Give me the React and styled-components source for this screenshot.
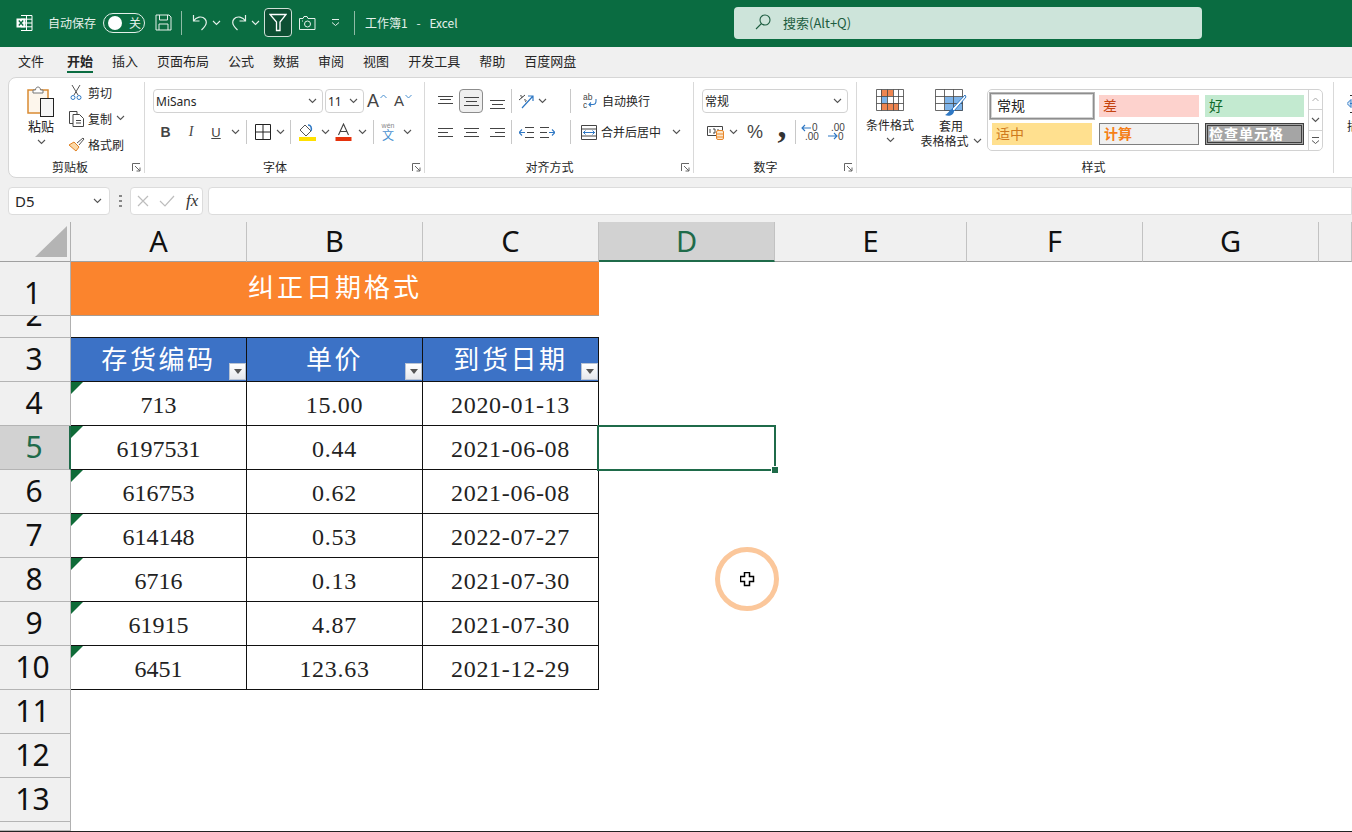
import React from 'react';
import styled, { createGlobalStyle } from 'styled-components';

const CJK = `"Noto Sans CJK SC", "Noto Sans", sans-serif`;

const GlobalStyle = createGlobalStyle`
  html, body { margin: 0; height: 100%; overflow: hidden; background: #f0f0f0; }
  body { font-family: ${CJK}; color: #262626; }
  * { box-sizing: border-box; }
  svg { display: block; flex: none; }
`;

const Page = styled.div`
  width: 1352px;
  height: 832px;
  display: flex;
  flex-direction: column;
  overflow: hidden;
  background: #f0f0f0;
`;

/* title bar */
const TitleBar = styled.div`
  height: 47px;
  flex: none;
  background: #0a6c41;
  display: flex;
  align-items: center;
  padding: 0 0 2px 16px;
  color: #e4f0ea;
  font-size: 12px;
`;
const Slot = styled.div`
  width: ${p => p.$w}px;
  height: ${p => p.$h || 24}px;
  margin-left: ${p => p.$ml || 0}px;
  flex: none;
  display: flex;
  align-items: center;
  justify-content: center;
`;
const BarDivider = styled.div`
  width: 1px;
  height: 24px;
  flex: none;
  background: #8fbba6;
  margin: 0 ${p => p.$r || 0}px 0 ${p => p.$l || 0}px;
`;
const AutoSave = styled.span`
  margin-left: 15px;
  width: 55px;
  flex: none;
`;
const Toggle = styled.div`
  width: 42px;
  height: 20px;
  flex: none;
  border: 1px solid #e4f0ea;
  border-radius: 10px;
  display: flex;
  align-items: center;
  padding-left: 4px;
  gap: 7px;
  font-size: 12px;
`;
const Knob = styled.i`
  width: 14px;
  height: 14px;
  border-radius: 50%;
  background: #fff;
`;
const FilterButton = styled.div`
  width: 28px;
  height: 29px;
  flex: none;
  margin-left: 1px;
  border: 1px solid #cfe0d7;
  border-radius: 4px;
  background: #0d4f33;
  display: flex;
  align-items: center;
  justify-content: center;
`;
const DocTitle = styled.div`
  margin-left: 10px;
  width: 369px;
  flex: none;
  white-space: pre;
  word-spacing: 1.7px;
`;
const SearchBox = styled.div`
  width: 468px;
  height: 32px;
  flex: none;
  background: #cde4da;
  border-radius: 4px;
  display: flex;
  align-items: center;
  padding: 0 0 1px 21px;
  gap: 12px;
  color: #1d5d40;
  font-size: 13px;
`;

/* ribbon tabs */
const Tabs = styled.div`
  height: 28px;
  flex: none;
  display: flex;
  gap: 19px;
  padding-left: 18px;
  font-size: 13px;
  line-height: 27px;
`;
const Tab = styled.div`
  position: relative;
  font-weight: ${p => (p.$active ? 700 : 400)};
  &:first-child { margin-right: 4px; }
  ${p => p.$active && `
    &::after {
      content: '';
      position: absolute;
      left: 0;
      right: 0;
      bottom: 2px;
      height: 2px;
      background: #0a6c41;
    }
  `}
`;

/* ribbon */
const Ribbon = styled.div`
  height: 101px;
  flex: none;
  margin: 2px -10px 0 8px;
  background: #fff;
  border: 1px solid #d6d6d6;
  border-radius: 8px;
  display: flex;
  align-items: stretch;
  overflow: hidden;
  font-size: 12px;
`;
const Group = styled.div`
  width: ${p => p.$w}px;
  flex: none;
  display: flex;
  flex-direction: column;
`;
const GroupSep = styled.div`
  width: 1px;
  flex: none;
  background: #d9d9d9;
  margin: 4px 0;
`;
const GroupBody = styled.div`
  padding: ${p => p.$top ?? 11}px 0 0 ${p => p.$left ?? 8}px;
  display: flex;
  flex: 1;
  min-height: 0;
`;
const Rows = styled.div`
  display: flex;
  flex-direction: column;
  gap: 7px;
`;
const Row = styled.div`
  display: flex;
  align-items: center;
  height: 24px;
`;
const GroupLabel = styled.div`
  height: 20px;
  display: grid;
  grid-template-columns: 1fr auto 1fr;
  align-items: center;
  padding-right: 3px;
  line-height: 20px;
  & > span { grid-column: 2; margin-right: ${p => p.$shift || 0}px; }
  & > svg { justify-self: end; }
`;
const VSep = styled.div`
  width: 1px;
  height: 24px;
  flex: none;
  background: #c8c8c8;
  margin: 0 ${p => p.$r ?? 4}px 0 ${p => p.$l ?? 4}px;
`;
const PasteColumn = styled.div`
  width: 32px;
  flex: none;
  padding-top: 5px;
  display: flex;
  flex-direction: column;
  align-items: center;
  font-size: 13px;
  line-height: 18px;
  & > svg:first-child { margin-bottom: -1px; }
  & > svg:last-child { margin-top: 4px; }
`;
const ClipColumn = styled.div`
  margin-left: 11px;
  display: flex;
  flex-direction: column;
`;
const ClipRow = styled.div`
  height: 26px;
  display: flex;
  align-items: center;
  & > span { margin-left: 4px; }
`;
const SelectBox = styled.div`
  width: ${p => p.$w}px;
  height: 24px;
  flex: none;
  margin-right: ${p => p.$mr || 0}px;
  background: #fff;
  border: 1px solid #d2d2d2;
  border-radius: 4px;
  display: flex;
  align-items: center;
  justify-content: space-between;
  padding: 0 5px 0 2px;
  font-family: "Noto Sans", ${CJK};
  font-size: 12px;
`;
const BoldMark = styled.span`
  font-family: "Liberation Sans", sans-serif;
  font-size: 14px;
  font-weight: 700;
  color: #444;
`;
const ItalicMark = styled(BoldMark)`
  font-family: "Liberation Serif", serif;
  font-weight: 400;
  font-style: italic;
`;
const UnderMark = styled(BoldMark)`
  font-weight: 400;
  text-decoration: underline;
  font-size: 13px;
`;
const GrowA = styled.span`
  font-family: "Liberation Sans", sans-serif;
  font-size: ${p => p.$size}px;
  line-height: 20px;
  color: #444;
  display: flex;
  align-items: flex-start;
  gap: 1px;
  & > svg { margin-top: 3px; }
`;
const PercentMark = styled.span`
  font-family: "Liberation Sans", sans-serif;
  font-size: 18px;
  color: #444;
`;
const CommaMark = styled.span`
  font-family: "Liberation Serif", serif;
  font-size: 36px;
  font-weight: 700;
  line-height: 24px;
  color: #333;
  transform: translateY(-7px);
`;
const ActiveAlign = styled.div`
  width: 24px;
  height: 24px;
  flex: none;
  margin: 0 2px;
  background: #efefef;
  border: 1px solid #8c8c8c;
  border-radius: 4px;
  display: flex;
  align-items: center;
  justify-content: center;
`;
const TextRun = styled.span`
  margin-left: ${p => p.$l || 4}px;
  padding-bottom: 1px;
  flex: none;
`;
const BigButton = styled.div`
  width: ${p => p.$w}px;
  flex: none;
  margin-left: ${p => p.$ml || 0}px;
  display: flex;
  flex-direction: column;
  align-items: center;
  line-height: 15px;
  font-size: 12px;
  white-space: nowrap;
  & > svg:first-child { margin-bottom: ${p => p.$gap}px; }
`;
const CaptionRow = styled.div`
  display: flex;
  align-items: center;
  gap: 4px;
  height: 15px;
`;
const Gallery = styled.div`
  width: 336px;
  height: 62px;
  flex: none;
  margin-left: 6px;
  border: 1px solid #d2d2d2;
  border-radius: 5px;
  display: flex;
`;
const StyleGrid = styled.div`
  width: 320px;
  display: grid;
  grid-template-columns: 109px 106px 105px;
  grid-template-rows: 30px 26px;
  padding: 2px 0 0 1px;
`;
const StyleCell = styled.div`
  margin: ${p => p.$m || '3px 5px 5px 1px'};
  display: flex;
  align-items: center;
  padding: 0 0 3px ${p => p.$pl || 4}px;
  font-size: 14px;
  line-height: 1;
  white-space: nowrap;
  ${p => p.$kind === 'normal' && `background:#fff;color:#222;border:1px solid #8e8e8e;outline:1px solid #b5b5b5;box-shadow:inset 0 0 0 1px #d4d4d4;`}
  ${p => p.$kind === 'bad' && `background:#fdd2cd;color:#c4430f;`}
  ${p => p.$kind === 'good' && `background:#c3ead0;color:#0f6a2a;`}
  ${p => p.$kind === 'mid' && `background:#ffe08f;color:#cf7a1c;`}
  ${p => p.$kind === 'calc' && `background:#f0f0f0;color:#f57f17;font-weight:700;border:1px solid #7f7f7f;`}
  ${p => p.$kind === 'check' && `background:#a5a5a5;color:#fff;font-weight:700;letter-spacing:1px;border:3px double #3f3f3f;`}
`;
const GalleryScroll = styled.div`
  width: 15px;
  margin-left: auto;
  border-left: 1px solid #d2d2d2;
  display: flex;
  flex-direction: column;
`;
const ScrollBtn = styled.div`
  flex: 1;
  display: flex;
  align-items: center;
  justify-content: center;
  & + & { border-top: 1px solid #d2d2d2; }
`;
const ClippedGroup = styled.div`
  margin-left: 13px;
  padding-top: 17px;
  display: flex;
  flex-direction: column;
  gap: 5px;
  width: 48px;
  flex: none;
  line-height: 15px;
`;

/* formula bar */
const FormulaBar = styled.div`
  height: 28px;
  flex: none;
  margin: 9px 0 7px 8px;
  display: flex;
  align-items: stretch;
`;
const NameBox = styled.div`
  width: 102px;
  flex: none;
  background: #fff;
  border: 1px solid #dcdcdc;
  border-radius: 4px;
  display: flex;
  align-items: center;
  justify-content: space-between;
  padding: 0 7px 0 6px;
  font-family: "Noto Sans", sans-serif;
  font-size: 15px;
`;
const BarDots = styled.div`
  width: 20px;
  flex: none;
  display: flex;
  align-items: center;
  justify-content: center;
`;
const FxBox = styled.div`
  width: 73px;
  flex: none;
  background: #fff;
  border: 1px solid #dcdcdc;
  border-radius: 4px;
  display: flex;
  align-items: center;
  padding-left: 5px;
  gap: 9px;
`;
const FxMark = styled.span`
  font-family: "Liberation Serif", serif;
  font-style: italic;
  font-size: 17px;
  color: #333;
  margin-left: 2px;
`;
const FormulaInput = styled.div`
  flex: 1;
  margin-left: 5px;
  background: #fff;
  border: 1px solid #dcdcdc;
  border-radius: 4px 0 0 4px;
`;

/* sheet */
const Sheet = styled.div`
  position: relative;
  flex: 1;
  background: #fff;
  display: grid;
  grid-template-columns: 71px 176px 176px 176px 176px 192px 176px 176px 1fr;
  grid-template-rows: 40px 54px 22px repeat(11, 44px) 1fr;
  border-bottom: 1px solid #222;
  overflow: hidden;
`;
const Corner = styled.div`
  background: #f0f0f0;
  border-right: 1px solid #b0b0b0;
  border-bottom: 1px solid #a0a0a0;
  display: flex;
  align-items: flex-end;
  justify-content: flex-end;
  padding: 0 3px 4px 0;
`;
const ColHead = styled.div`
  background: ${p => (p.$sel ? '#d2d2d2' : '#f0f0f0')};
  color: ${p => (p.$sel ? '#1f6b4a' : '#111')};
  border-right: 1px solid #c2c2c2;
  border-bottom: ${p => (p.$sel ? '2px solid #1f6b4a' : '1px solid #a0a0a0')};
  font-family: "Noto Sans", sans-serif;
  font-size: 29px;
  line-height: 37px;
  text-align: center;
`;
const RowHead = styled.div`
  background: ${p => (p.$sel ? '#d2d2d2' : '#f0f0f0')};
  color: ${p => (p.$sel ? '#1f6b4a' : '#111')};
  border-right: ${p => (p.$sel ? '2px solid #1f6b4a' : '1px solid #b0b0b0')};
  border-bottom: 1px solid #b4b4b4;
  font-family: "Noto Sans", sans-serif;
  font-size: 30px;
  line-height: 40px;
  display: flex;
  align-items: flex-end;
  justify-content: center;
  overflow: hidden;
  padding: 0 ${p => (p.$wide ? 5 : p.$sel ? 1 : 2)}px 2px 0;
`;
const TitleCell = styled.div`
  grid-column: span 3;
  background: #fb842d;
  border-bottom: 1px solid #a89b90;
  color: #fff;
  font-size: 26px;
  letter-spacing: 3px;
  display: flex;
  align-items: center;
  justify-content: center;
  padding-bottom: 6px;
`;
const Blank = styled.div`
  grid-column: span ${p => p.$span};
  border-bottom: ${p => (p.$line ? '1px solid #111' : 'none')};
`;
const TableHead = styled.div`
  position: relative;
  background: #3c72c6;
  border-right: 1px solid #111;
  border-bottom: 1px solid #111;
  color: #fff;
  font-size: 26px;
  letter-spacing: 2.6px;
  display: flex;
  align-items: center;
  justify-content: center;
  padding-bottom: 5px;
`;
const FilterBox = styled.div`
  position: absolute;
  right: 0;
  bottom: 1px;
  width: 17px;
  height: 17px;
  border: 1px solid #b9c4d4;
  background: linear-gradient(#fff, #e6e8ec);
  display: flex;
  align-items: center;
  justify-content: center;
  &::after {
    content: '';
    border: 4px solid transparent;
    border-top: 5px solid #555;
    border-bottom: 0;
  }
`;
const BodyCell = styled.div`
  position: relative;
  border-right: 1px solid #111;
  border-bottom: 1px solid #111;
  font-family: "Liberation Serif", serif;
  font-size: 24px;
  letter-spacing: ${p => (p.$flag ? 0 : 0.7)}px;
  color: #222;
  display: flex;
  align-items: center;
  justify-content: center;
  padding-top: 4px;
  ${p => p.$flag && `
    &::before {
      content: '';
      position: absolute;
      left: 0;
      top: 0;
      width: 12px;
      height: 12px;
      background: #0f6b38;
      clip-path: polygon(0 0, 100% 0, 0 100%);
    }
  `}
`;
const SelectedCell = styled.div`
  position: relative;
`;
const SelectionFrame = styled.div`
  position: absolute;
  inset: -1px -1px -1px -2px;
  border: 2px solid #1f6b4a;
  z-index: 2;
`;
const FillHandle = styled.i`
  position: absolute;
  right: -4px;
  bottom: -4px;
  width: 6px;
  height: 6px;
  background: #1f6b4a;
  border: 1px solid #fff;
  box-sizing: content-box;
  margin: -1px;
`;
const CursorRing = styled.div`
  position: absolute;
  left: 715px;
  top: 325px;
  width: 64px;
  height: 64px;
  border: 5px solid #fbc79b;
  border-radius: 50%;
  display: flex;
  align-items: center;
  justify-content: center;
  z-index: 3;
`;

/* icons */
const Chevron = ({ color = '#555' }) => (
  <svg width="9" height="6" viewBox="0 0 9 6" fill="none" stroke={color} strokeWidth="1.1"><path d="M1 1l3.5 3.5L8 1" /></svg>
);
const ChevronUp = ({ color = '#555' }) => (
  <svg width="7" height="5" viewBox="0 0 7 5" fill="none" stroke={color}><path d="M.5 4l3-3 3 3" /></svg>
);
const SmallChevron = ({ color = '#555' }) => (
  <svg width="7" height="5" viewBox="0 0 7 5" fill="none" stroke={color}><path d="M.5 1l3 3 3-3" /></svg>
);
const Launcher = () => (
  <svg width="9" height="9" viewBox="0 0 9 9" fill="none" stroke="#666" strokeWidth="1"><path d="M.5 8V.5H8M3 3l5 5M8 4.5V8H4.5" /></svg>
);
const ExcelLogo = () => (
  <svg width="17" height="18" viewBox="0 0 17 18" fill="none">
    <path d="M5 1.5h11v15H5M5 5.2h11M5 9h11M5 12.8h11M10.500 1.500v15" stroke="#fff" />
    <rect x="0.500" y="4.500" width="9" height="9" fill="#fff" />
    <path d="M2.800 6.500l4.400 5M7.200 6.500l-4.400 5" stroke="#0a6c41" strokeWidth="1.300" />
  </svg>
);
const SaveIcon = () => (
  <svg width="17" height="17" viewBox="0 0 17 17" fill="none" stroke="#e4f0ea"><path d="M1 1h13l2 2v13H1zM4.500 1v5h8V1M4 16v-6h9v6" /></svg>
);
const UndoIcon = () => (
  <svg width="16" height="17" viewBox="0 0 16 17" fill="none" stroke="#e4f0ea" strokeWidth="1.200"><path d="M1.500 1v6h6M1.500 7C4 3 10 1.500 13 5c2.500 3 1 7-3.500 11" /></svg>
);
const RedoIcon = () => (
  <svg width="16" height="17" viewBox="0 0 16 17" fill="none" stroke="#e4f0ea" strokeWidth="1.200"><path d="M14.500 1v6h-6M14.500 7C12 3 6 1.500 3 5c-2.500 3-1 7 3.500 11" /></svg>
);
const FunnelIcon = () => (
  <svg width="18" height="19" viewBox="0 0 18 19" fill="none" stroke="#fff" strokeWidth="1.300"><path d="M1 1.500h16l-6 7.500v8.500H7.500V9z" /></svg>
);
const CameraIcon = () => (
  <svg width="17" height="14" viewBox="0 0 17 14" fill="none" stroke="#e4f0ea"><path d="M.5 2.500h3.500l1-2h3l1 2h7v11H.5z" /><circle cx="8.500" cy="8" r="3" /><path d="M3 5h1" /></svg>
);
const QatMore = ({ color = '#e4f0ea' }) => (
  <svg width="9" height="9" viewBox="0 0 9 9" fill="none" stroke={color}><path d="M1 1.500h7M1 4.500l3.500 3 3.500-3" /></svg>
);
const SearchIcon = () => (
  <svg width="16" height="16" viewBox="0 0 16 16" fill="none" stroke="#1d5d40" strokeWidth="1.100"><circle cx="10" cy="6" r="5" /><path d="M6.500 9.500L1 15" /></svg>
);
const PasteIcon = () => (
  <svg width="28" height="33" viewBox="0 0 28 33" fill="none">
    <rect x="1" y="5" width="20" height="23" fill="#fdf6ec" stroke="#d98a32" strokeWidth="1.500" />
    <path d="M6 5h2.500c0-4 5-4 5 0H16v3H6z" fill="#fff" stroke="#777" />
    <rect x="13.500" y="13.500" width="13" height="18" fill="#f6f6f6" stroke="#222" />
  </svg>
);
const ScissorsIcon = () => (
  <svg width="12" height="17" viewBox="0 0 12 17" fill="none" stroke="#555"><path d="M2 1l6 10M10 1L4 11" /><circle cx="3" cy="13.500" r="2" stroke="#2f78c4" /><circle cx="9" cy="13.500" r="2" stroke="#2f78c4" /></svg>
);
const CopyIcon = () => (
  <svg width="15" height="16" viewBox="0 0 15 16" fill="none" stroke="#444"><path d="M4 12.500H.500V.500H8v3M4 3.500h6.500l4 4v8H4zM7 9.500h5M7 12h5" /></svg>
);
const BrushIcon = () => (
  <svg width="17" height="15" viewBox="0 0 17 15" fill="none"><path d="M1 8l5-3 5 5-3 4z" fill="#fbd9a8" stroke="#e07f20" /><path d="M9 6l6-5 1 1-5 6" fill="#fff" stroke="#555" /></svg>
);
const BorderIcon = () => (
  <svg width="16" height="16" viewBox="0 0 16 16" fill="none" stroke="#222"><path d="M.5.500h15v15H.500zM8 .5v15M.5 8h15" /></svg>
);
const FillIcon = () => (
  <svg width="19" height="19" viewBox="0 0 19 19" fill="none">
    <path d="M7 2l6 6-5 5-6-6z" fill="#fff" stroke="#555" />
    <path d="M13 8c1-3 0-6-3-6" stroke="#2f78c4" strokeWidth="1.500" />
    <rect x="1" y="14" width="17" height="4" fill="#ffe000" />
  </svg>
);
const FontColorIcon = () => (
  <svg width="17" height="19" viewBox="0 0 17 19" fill="none">
    <path d="M3.500 12L8.500 1l5 11M5.300 8.500h6.400" stroke="#444" strokeWidth="1.100" />
    <rect x="0.500" y="14" width="16" height="4" fill="#e5320c" />
  </svg>
);
const WenIcon = () => (
  <svg width="16" height="20" viewBox="0 0 16 20" fill="none">
    <text x="8" y="6" textAnchor="middle" fontFamily="Liberation Sans" fontSize="7" fill="#888">wén</text>
    <text x="8" y="18" textAnchor="middle" fontFamily="Noto Sans CJK SC" fontSize="12" fill="#4a90d0">文</text>
  </svg>
);
const Lines = ({ ys, xs }) => (
  <svg width="15" height="15" viewBox="0 0 15 15" fill="none" stroke="#444">
    {ys.map((y, i) => <path key={y} d={`M${xs[i][0]} ${y}.5H${xs[i][1]}`} />)}
  </svg>
);
const wide = [[0, 15], [2, 13], [0, 15]];
const OrientIcon = () => (
  <svg width="17" height="16" viewBox="0 0 17 16" fill="none">
    <path d="M1 7l6-5M2 3c2-1 3 1 1 2M6 7c2-1 3 1 1 2" stroke="#444" />
    <path d="M4 15L15 3M10 3h5v5" stroke="#2f78c4" strokeWidth="1.200" />
  </svg>
);
const OutdentIcon = ({ flip }) => (
  <svg width="15" height="13" viewBox="0 0 15 13" fill="none" style={flip ? { transform: 'scaleX(-1)' } : undefined}>
    <path d="M6 1.500h9M8 6.500h7M6 11.500h9" stroke="#444" />
    <path d="M0 6.500h6M3 3.500l-3 3 3 3" stroke="#2f78c4" strokeWidth="1.100" />
  </svg>
);
const WrapIcon = () => (
  <svg width="15" height="16" viewBox="0 0 15 16" fill="none">
    <text x="0" y="7" fontFamily="Liberation Sans" fontSize="8.500" fill="#444">ab</text>
    <text x="0" y="15" fontFamily="Liberation Sans" fontSize="8.500" fill="#444">c</text>
    <path d="M13 6v2c0 3-1 3.500-3 3.500H6M8 9.500l-2 2 2 2" stroke="#2f78c4" strokeWidth="1.100" />
  </svg>
);
const MergeIcon = () => (
  <svg width="16" height="15" viewBox="0 0 16 15" fill="none">
    <path d="M.5.500h15v14H.500zM.5 4h15M.5 11h15" stroke="#444" />
    <path d="M2 7.500h12M4.500 5.500l-2 2 2 2M11.500 5.500l2 2-2 2" stroke="#2f78c4" />
  </svg>
);
const AccountIcon = () => (
  <svg width="17" height="16" viewBox="0 0 17 16" fill="none">
    <path d="M.5 2.500h15v9H.500zM3 5v4M6 5h2v4H6M11 5v4" stroke="#444" />
    <rect x="9.500" y="6.500" width="7" height="9" rx="1.500" fill="#fde8cc" stroke="#e8862a" />
    <path d="M10 10h6M10 13h6" stroke="#e8862a" />
  </svg>
);
const DecimalIcon = ({ up }) => (
  <svg width="18" height="18" viewBox="0 0 18 18" fill="none" fontFamily="Liberation Sans" fontSize="10">
    {up ? (
      <>
        <text x="11" y="8" fill="#444">0</text>
        <text x="4" y="17" fill="#444">.00</text>
        <path d="M1 5h9M4 2L1 5l3 3" stroke="#2f78c4" strokeWidth="1.100" />
      </>
    ) : (
      <>
        <text x="4" y="8" fill="#444">.00</text>
        <text x="11" y="17" fill="#444">0</text>
        <path d="M1 13h9M7 10l3 3-3 3" stroke="#2f78c4" strokeWidth="1.100" />
      </>
    )}
  </svg>
);
const CondIcon = () => (
  <svg width="28" height="22" viewBox="0 0 28 22" fill="none">
    <rect x="5" y="1" width="12" height="6" fill="#ee8550" />
    <rect x="5" y="7" width="6" height="7" fill="#7eb4ea" />
    <rect x="5" y="14" width="18" height="7" fill="#ee8550" />
    <path d="M.5.500h27v21H.500zM.5 7.500h27M.5 14.500h27M5.500.5v21M11.500.5v21M17.500.5v21M22.500.5v21" stroke="#444" strokeWidth=".8" />
  </svg>
);
const TableIcon = () => (
  <svg width="32" height="30" viewBox="0 0 32 30" fill="none">
    <rect x="10" y="8" width="18" height="14" fill="#7eb4ea" />
    <path d="M.5.500h27v21H.500zM.5 7.500h27M.5 14.500h27M9.500.5v21M18.500.5v21" stroke="#444" strokeWidth=".8" />
    <path d="M30 6L17 20l2 2L31 8z" fill="#fff" stroke="#2f78c4" />
    <path d="M17 20c-3 1-3 4-7 6 4 2 9 0 9-4z" fill="#2f78c4" />
  </svg>
);
const InsertCellsIcon = () => (
  <svg width="20" height="18" viewBox="0 0 20 18" fill="none">
    <path d="M3 .5h15v17H3" stroke="#333" />
    <path d="M0 8.500l4-4v8zM3 8.500h7" stroke="#2f78c4" fill="#cfe2f5" />
  </svg>
);
const DotsIcon = () => (
  <svg width="3" height="12" viewBox="0 0 3 12" fill="#888"><rect y="0" width="3" height="2" /><rect y="5" width="3" height="2" /><rect y="10" width="3" height="2" /></svg>
);
const CancelIcon = () => (
  <svg width="14" height="14" viewBox="0 0 14 14" fill="none" stroke="#bdbdbd" strokeWidth="1.200"><path d="M2 2l10 10M12 2L2 12" /></svg>
);
const CheckIcon = () => (
  <svg width="16" height="14" viewBox="0 0 16 14" fill="none" stroke="#bdbdbd" strokeWidth="1.200"><path d="M1 7l5 5L15 2" /></svg>
);
const CornerMark = () => (
  <svg width="32" height="31" viewBox="0 0 32 31"><path d="M32 0v31H0z" fill="#b4b4b4" /></svg>
);
const PlusCursor = () => (
  <svg width="15" height="15" viewBox="0 0 15 15"><path d="M4.500.500h5v4h4v5h-4v4h-5v-4h-4v-5h4z" fill="#fff" stroke="#000" strokeWidth="1.500" /></svg>
);

const columns = ['A', 'B', 'C', 'D', 'E', 'F', 'G'];
const records = [
  ['713', '15.00', '2020-01-13'],
  ['6197531', '0.44', '2021-06-08'],
  ['616753', '0.62', '2021-06-08'],
  ['614148', '0.53', '2022-07-27'],
  ['6716', '0.13', '2021-07-30'],
  ['61915', '4.87', '2021-07-30'],
  ['6451', '123.63', '2021-12-29'],
];
const tabs = ['文件', '开始', '插入', '页面布局', '公式', '数据', '审阅', '视图', '开发工具', '帮助', '百度网盘'];

const TopBar = () => (
  <TitleBar>
    <ExcelLogo />
    <AutoSave>自动保存</AutoSave>
    <Toggle><Knob />关</Toggle>
    <Slot $w={36}><SaveIcon /></Slot>
    <BarDivider $r={10} />
    <Slot $w={16}><UndoIcon /></Slot>
    <Slot $w={16}><Chevron color="#e4f0ea" /></Slot>
    <Slot $w={16} $ml={7}><RedoIcon /></Slot>
    <Slot $w={16}><Chevron color="#e4f0ea" /></Slot>
    <FilterButton><FunnelIcon /></FilterButton>
    <Slot $w={30}><CameraIcon /></Slot>
    <Slot $w={26}><QatMore /></Slot>
    <BarDivider $l={6} />
    <DocTitle>{'工作簿1  -  Excel'}</DocTitle>
    <SearchBox><SearchIcon />搜索(Alt+Q)</SearchBox>
  </TitleBar>
);

const RibbonTabs = () => (
  <Tabs>
    {tabs.map(t => <Tab key={t} $active={t === '开始'}>{t}</Tab>)}
  </Tabs>
);

const Label = ({ text, shift = 16, launcher = true }) => (
  <GroupLabel $shift={shift}><span>{text}</span>{launcher && <Launcher />}</GroupLabel>
);

const ClipboardGroup = () => (
  <Group $w={135}>
    <GroupBody $top={2} $left={16}>
      <PasteColumn>
        <PasteIcon />
        粘贴
        <Chevron />
      </PasteColumn>
      <ClipColumn>
        <ClipRow><Slot $w={16} $h={17}><ScissorsIcon /></Slot><span>剪切</span></ClipRow>
        <ClipRow><Slot $w={16} $h={17}><CopyIcon /></Slot><span>复制</span><TextRun $l={11}><Chevron /></TextRun></ClipRow>
        <ClipRow><Slot $w={16} $h={17}><BrushIcon /></Slot><span>格式刷</span></ClipRow>
      </ClipColumn>
    </GroupBody>
    <Label text="剪贴板" shift={10} />
  </Group>
);

const FontGroup = () => (
  <Group $w={279}>
    <GroupBody>
      <Rows>
        <Row>
          <SelectBox $w={170} $mr={2}>MiSans<Chevron /></SelectBox>
          <SelectBox $w={39}>11<Chevron /></SelectBox>
          <Slot $w={26}><GrowA $size={18}>A<ChevronUp color="#4a90d0" /></GrowA></Slot>
          <Slot $w={26}><GrowA $size={15}>A<SmallChevron color="#4a90d0" /></GrowA></Slot>
        </Row>
        <Row>
          <Slot $w={25}><BoldMark>B</BoldMark></Slot>
          <Slot $w={26}><ItalicMark>I</ItalicMark></Slot>
          <Slot $w={24}><UnderMark>U</UnderMark></Slot>
          <Slot $w={14}><Chevron /></Slot>
          <VSep />
          <Slot $w={23}><BorderIcon /></Slot>
          <Slot $w={12}><Chevron /></Slot>
          <VSep />
          <Slot $w={24}><FillIcon /></Slot>
          <Slot $w={12}><Chevron /></Slot>
          <Slot $w={24}><FontColorIcon /></Slot>
          <Slot $w={14}><Chevron /></Slot>
          <VSep />
          <Slot $w={20}><WenIcon /></Slot>
          <Slot $w={18}><Chevron /></Slot>
        </Row>
      </Rows>
    </GroupBody>
    <Label text="字体" />
  </Group>
);

const AlignGroup = () => (
  <Group $w={268}>
    <GroupBody>
      <Rows>
        <Row>
          <Slot $w={24}><Lines ys={[2, 5, 9]} xs={wide} /></Slot>
          <ActiveAlign><Lines ys={[3, 7, 11]} xs={wide} /></ActiveAlign>
          <Slot $w={24}><Lines ys={[6, 10, 14]} xs={wide} /></Slot>
          <VSep $l={2} $r={6} />
          <Slot $w={16}><OrientIcon /></Slot>
          <Slot $w={16}><Chevron /></Slot>
          <VSep $l={20} $r={12} />
          <WrapIcon />
          <TextRun>自动换行</TextRun>
        </Row>
        <Row>
          <Slot $w={24}><Lines ys={[3, 7, 11]} xs={[[0, 15], [0, 10], [0, 15]]} /></Slot>
          <Slot $w={28}><Lines ys={[3, 7, 11]} xs={wide} /></Slot>
          <Slot $w={24}><Lines ys={[3, 7, 11]} xs={[[0, 15], [5, 15], [0, 15]]} /></Slot>
          <VSep $l={2} $r={6} />
          <Slot $w={16}><OutdentIcon /></Slot>
          <Slot $w={26}><OutdentIcon flip /></Slot>
          <VSep $l={10} $r={10} />
          <MergeIcon />
          <TextRun>合并后居中</TextRun>
          <TextRun $l={11}><Chevron /></TextRun>
        </Row>
      </Rows>
    </GroupBody>
    <Label text="对齐方式" />
  </Group>
);

const NumberGroup = () => (
  <Group $w={162}>
    <GroupBody>
      <Rows>
        <Row><SelectBox $w={146}>常规<Chevron /></SelectBox></Row>
        <Row>
          <Slot $w={26}><AccountIcon /></Slot>
          <Slot $w={10}><Chevron /></Slot>
          <Slot $w={34}><PercentMark>%</PercentMark></Slot>
          <Slot $w={20}><CommaMark>,</CommaMark></Slot>
          <VSep $l={3} $r={4} />
          <Slot $w={20}><DecimalIcon up /></Slot>
          <Slot $w={32}><DecimalIcon /></Slot>
        </Row>
      </Rows>
    </GroupBody>
    <Label text="数字" />
  </Group>
);

const StylesGroup = () => (
  <Group $w={476}>
    <GroupBody $left={9}>
      <BigButton $w={48} $gap={6}>
        <CondIcon />
        条件格式
        <CaptionRow><Chevron /></CaptionRow>
      </BigButton>
      <BigButton $w={60} $gap={-1} $ml={7}>
        <TableIcon />
        套用
        <CaptionRow>表格格式<Chevron /></CaptionRow>
      </BigButton>
      <Gallery>
        <StyleGrid>
          <StyleCell $kind="normal" $pl={6} $m="1px 4px 3px 1px">常规</StyleCell>
          <StyleCell $kind="bad">差</StyleCell>
          <StyleCell $kind="good">好</StyleCell>
          <StyleCell $kind="mid" $m="1px 6px 3px 3px">适中</StyleCell>
          <StyleCell $kind="calc" $m="1px 5px 3px 1px">计算</StyleCell>
          <StyleCell $kind="check" $m="1px 5px 3px 1px" $pl={1}>检查单元格</StyleCell>
        </StyleGrid>
        <GalleryScroll>
          <ScrollBtn><ChevronUp color="#aaa" /></ScrollBtn>
          <ScrollBtn><Chevron /></ScrollBtn>
          <ScrollBtn><QatMore color="#555" /></ScrollBtn>
        </GalleryScroll>
      </Gallery>
    </GroupBody>
    <Label text="样式" launcher={false} shift={0} />
  </Group>
);

const FormulaRow = () => (
  <FormulaBar>
    <NameBox>D5<Chevron /></NameBox>
    <BarDots><DotsIcon /></BarDots>
    <FxBox><CancelIcon /><CheckIcon /><FxMark>fx</FxMark></FxBox>
    <FormulaInput />
  </FormulaBar>
);

const Worksheet = () => (
  <Sheet>
    <Corner><CornerMark /></Corner>
    {columns.map(c => <ColHead key={c} $sel={c === 'D'}>{c}</ColHead>)}
    <ColHead />

    <RowHead $wide>1</RowHead>
    <TitleCell>纠正日期格式</TitleCell>
    <Blank $span={5} />

    <RowHead>2</RowHead>
    <Blank $span={3} $line />
    <Blank $span={5} />

    <RowHead>3</RowHead>
    {['存货编码', '单价', '到货日期'].map(h => (
      <TableHead key={h}>{h}<FilterBox /></TableHead>
    ))}
    <Blank $span={5} />

    {records.map((rec, i) => (
      <React.Fragment key={rec[0]}>
        <RowHead $sel={i === 1} $wide={i + 4 >= 10}>{i + 4}</RowHead>
        <BodyCell $flag>{rec[0]}</BodyCell>
        <BodyCell>{rec[1]}</BodyCell>
        <BodyCell>{rec[2]}</BodyCell>
        {i === 1 ? (
          <>
            <SelectedCell><SelectionFrame><FillHandle /></SelectionFrame></SelectedCell>
            <Blank $span={4} />
          </>
        ) : <Blank $span={5} />}
      </React.Fragment>
    ))}

    {[11, 12, 13].map(n => (
      <React.Fragment key={n}>
        <RowHead $wide>{n}</RowHead>
        <Blank $span={8} />
      </React.Fragment>
    ))}
    <RowHead />
    <Blank $span={8} />

    <CursorRing><PlusCursor /></CursorRing>
  </Sheet>
);

export default function App() {
  return (
    <Page>
      <GlobalStyle />
      <TopBar />
      <RibbonTabs />
      <Ribbon>
        <ClipboardGroup /><GroupSep />
        <FontGroup /><GroupSep />
        <AlignGroup /><GroupSep />
        <NumberGroup /><GroupSep />
        <StylesGroup /><GroupSep />
        <ClippedGroup><InsertCellsIcon />插入</ClippedGroup>
      </Ribbon>
      <FormulaRow />
      <Worksheet />
    </Page>
  );
}
